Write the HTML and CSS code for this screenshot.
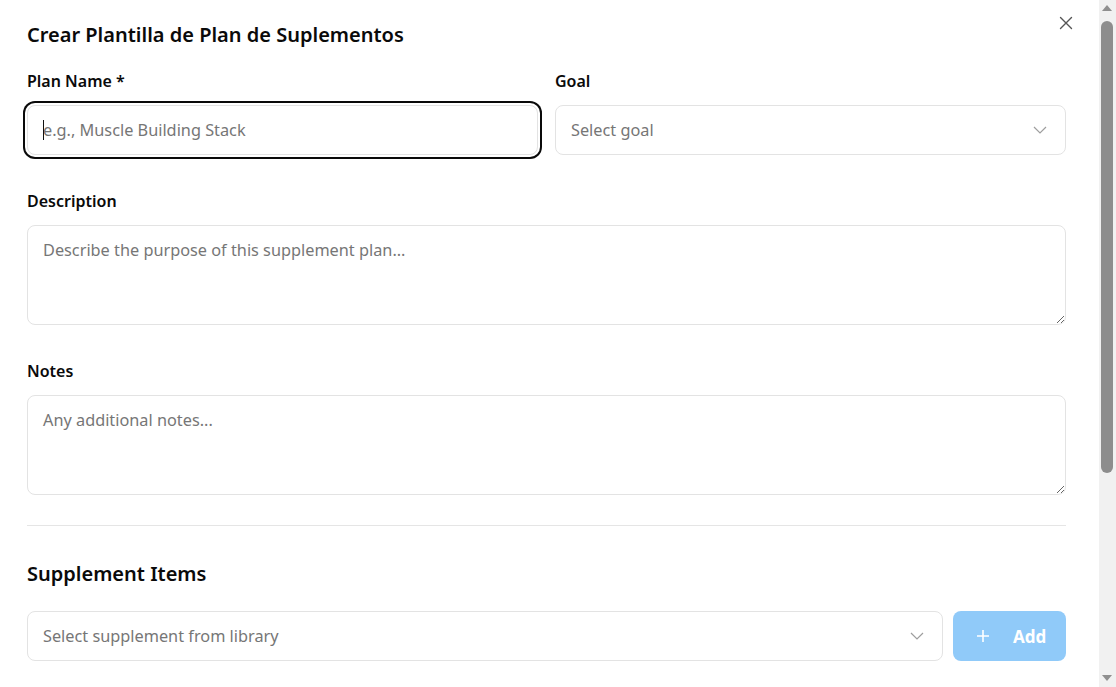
FILE: index.html
```html
<!DOCTYPE html>
<html lang="es">
<head>
<meta charset="utf-8">
<title>Crear Plantilla de Plan de Suplementos</title>
<link rel="stylesheet" href="styles.css">
</head>
<body>
<div class="viewport">
  <div class="scroller">
    <div class="dialog">
      <button class="close" aria-label="Close">
        <svg width="14" height="14" viewBox="0 0 14 14"><path d="M1.5 1.5 L12.5 12.5 M12.5 1.5 L1.5 12.5" stroke="#555" stroke-width="1.4" stroke-linecap="round" fill="none"/></svg>
      </button>
      <h2 class="title">Crear Plantilla de Plan de Suplementos</h2>
      <div class="row">
        <div class="field">
          <label class="label">Plan Name *</label>
          <div class="caretwrap">
            <input class="input focused" type="text" placeholder="e.g., Muscle Building Stack">
          </div>
        </div>
        <div class="field">
          <label class="label">Goal</label>
          <div class="select"><span class="ph">Select goal</span>
            <svg class="chev" width="14" height="8" viewBox="0 0 14 8"><path d="M1 1 L7 7 L13 1" stroke="#9e9e9e" stroke-width="1.2" fill="none"/></svg>
          </div>
        </div>
      </div>
      <div class="field block">
        <label class="label">Description</label>
        <textarea class="textarea" placeholder="Describe the purpose of this supplement plan..."></textarea>
      </div>
      <div class="field block">
        <label class="label">Notes</label>
        <textarea class="textarea" placeholder="Any additional notes..."></textarea>
      </div>
      <hr class="divider">
      <h3 class="section">Supplement Items</h3>
      <div class="addrow">
        <div class="select grow"><span class="ph">Select supplement from library</span>
          <svg class="chev" width="14" height="8" viewBox="0 0 14 8"><path d="M1 1 L7 7 L13 1" stroke="#9e9e9e" stroke-width="1.2" fill="none"/></svg>
        </div>
        <button class="add">
          <svg width="12" height="12" viewBox="0 0 12 12"><path d="M6 0 V12 M0 6 H12" stroke="#fff" stroke-width="1.6" fill="none"/></svg>
          <span>Add</span>
        </button>
      </div>
    </div>
  </div>
  <div class="scrollbar">
    <div class="sb-btn"><div class="tri tri-up"></div></div>
    <div class="sb-track"><div class="sb-thumb"></div></div>
    <div class="sb-btn"><div class="tri tri-down"></div></div>
  </div>
</div>
</body>
</html>
```
FILE: styles.css
```css
html, body { margin: 0; padding: 0; background: #fff; overflow: hidden; }
body { font-family: "Noto Sans", "Open Sans", sans-serif; color: #0a0a0a; }
.viewport { display: flex; height: 100vh; }
.scroller { flex: 1; min-width: 0; overflow: hidden; }
.scrollbar { width: 17px; flex: none; background: #f1f1f1; display: flex; flex-direction: column; }
.sb-btn { height: 17px; min-height: 17px; flex: none; padding-top: 5px; box-sizing: border-box; }
.tri { width: 10px; height: 6px; margin-left: 3px; background: #8f8f8f; }
.tri-up { clip-path: polygon(50% 0, 100% 100%, 0 100%); }
.tri-down { clip-path: polygon(0 0, 100% 0, 50% 100%); }
.sb-track { flex: 1; padding: 4px 3px 0 2px; }
.sb-thumb { height: 452px; background: #8d8d8d; border-radius: 6px; }
.dialog { position: relative; padding: 20px 33px 0 27px; }
.close { position: absolute; top: 16px; right: 26px; background: none; border: 0; padding: 0; width: 14px; height: 14px; cursor: pointer; }
.close svg { display: block; }
.title { margin: 0; font-size: 20px; font-weight: 600; line-height: 30px; }
.row { display: grid; grid-template-columns: 1fr 1fr; gap: 17px; margin-top: 19px; }
.field { display: flex; flex-direction: column; }
.label { font-size: 16px; font-weight: 600; line-height: 24px; margin-bottom: 12px; }
.block { margin-top: 34px; }
.input, .select, .textarea { box-sizing: border-box; border: 1px solid #e3e3e3; border-radius: 8px; background: #fff; font-family: inherit; font-size: 16.3px; color: #0a0a0a; }
.caretwrap { position: relative; display: flex; flex-direction: column; }
.caretwrap::after { content: ""; position: absolute; left: 16px; top: 15px; width: 1px; height: 20px; background: #111; }
.input { height: 50px; padding: 0 15px; outline: none; width: 100%; }
.input::placeholder, .textarea::placeholder { color: #767676; }
.focused, .input:focus { box-shadow: 0 0 0 2px #fff, 0 0 0 4px #0a0a0a; }
.select { height: 50px; padding: 0 18px 0 15px; display: flex; align-items: center; justify-content: space-between; }
.ph { color: #767676; }
.textarea { height: 100px; padding: 12px 15px; resize: vertical; outline: none; line-height: 24px; width: 100%; display: block; }
.divider { border: 0; border-top: 1px solid #e5e5e5; margin: 30px 0 0; }
.section { margin: 33px 0 0; font-size: 20px; font-weight: 600; line-height: 30px; }
.addrow { display: flex; gap: 10px; margin-top: 22px; }
.grow { flex: 1; }
.add { width: 113px; height: 50px; border: 0; border-radius: 8px; background: #90caf9; color: #fff; font-family: inherit; font-size: 17px; font-weight: 700; display: flex; align-items: center; justify-content: flex-start; gap: 24px; padding: 0 0 0 24px; flex: none; }
.add svg { display: block; }
```
